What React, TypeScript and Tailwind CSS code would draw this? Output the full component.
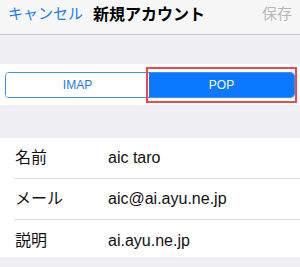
import React from "react";

const font = { fontFamily: '"Liberation Sans", "Noto Sans CJK JP", sans-serif' };

const rows = [
  { label: "名前", value: "aic taro" },
  { label: "メール", value: "aic@ai.ayu.ne.jp" },
  { label: "説明", value: "ai.ayu.ne.jp" },
];

const App = () => {
  return (
    <div
      className="w-[300px] h-[267px] bg-[#efeff4] overflow-hidden flex flex-col"
      style={font}
    >
      <div className="h-[35px] shrink-0 bg-[#f7f7f8] border-b border-[#c8c7cc] flex items-center px-[8px] pb-[5px]">
        <span className="text-[15px] text-[#1a7cf5] w-[85px]">キャンセル</span>
        <span className="text-[16px] font-bold text-black">新規アカウント</span>
        <span className="ml-auto text-[15px] text-[#b8b8bb]">保存</span>
      </div>

      <div className="mt-[29px] h-[41px] bg-white flex items-center px-[5px] relative">
        <div className="flex w-full h-[26px] border border-[#3d8ff7] rounded-[4px] overflow-hidden">
          <div className="w-[143px] flex items-center justify-center text-[12px] text-[#1a7cf5] bg-white">
            IMAP
          </div>
          <div className="flex-1 flex items-center justify-center text-[12px] text-white bg-[#0a78ff]">
            POP
          </div>
        </div>
        <div className="absolute left-[146px] top-[3px] w-[151px] h-[36px] border-2 border-[#f0484b]" />
      </div>

      <div className="mt-[33px] bg-white flex flex-col">
        {rows.map((r, i) => (
          <div key={r.label} className="pl-[14px]">
            <div
              className={
                i < rows.length - 1
                  ? "h-[41px] flex items-center border-b border-[#dcdce0]"
                  : "h-[37px] flex items-center pt-[4px]"
              }
            >
              <span className="w-[94px] pl-[1px] text-[16px] text-[#111]">
                {r.label}
              </span>
              <span className="text-[16px] text-[#111]">{r.value}</span>
            </div>
          </div>
        ))}
      </div>
    </div>
  );
};

export default App;
